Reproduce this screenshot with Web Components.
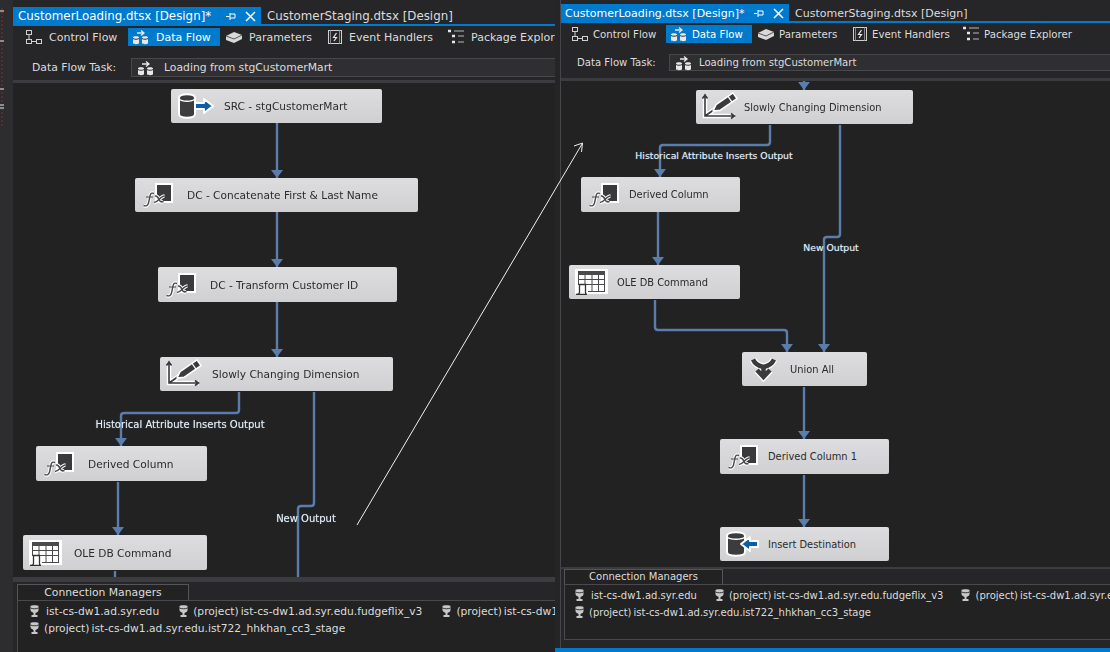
<!DOCTYPE html>
<html>
<head>
<meta charset="utf-8">
<title>CustomerLoading.dtsx</title>
<style>
  html, body { margin: 0; height: 100%; background: #252527; }
  body { font-family: "DejaVu Sans", sans-serif; overflow: hidden; }
  #desktop { display: flex; width: 1110px; height: 652px; position: relative; filter: blur(0.35px); }
  #right { display: flex; flex-direction: column; width: 555px; flex: none; }
  #right ssis-designer { flex: 1; min-height: 0; margin-left: 5px; border-left: 1px solid #45454a; box-sizing: border-box; }
  #left-designer { width: 542px; --top: 7px; --tab-nudge: 1px; --bar-h: 22px; --task-gap: 10px; --task-h: 19px; --task-after: 3px; --canvas-h: 494px; --split: 5px; --conn-gap: 2px;
    --tab-font: 11.85px; --tool-font: 11px; --tool-gap: 6px; --task-font: 10.8px; --label-w: 118px; --label-pad: 19px; --combo-pad: 5px; --combo-gap: 9px;
    --node-font: 10.6px; --label-font: 10px; --conn-font: 10.7px; --conn-pad: 12px; --conn-after: 20px; --head-w: 172px; --head-h: 16px; --head-font: 10.8px; --panel-left: 4px; --panel-gap: -2px; }
  #right-designer { --top: 4px; --tab-nudge: 1px; --bar-h: 22px; --task-gap: 9px; --task-h: 17px; --task-after: 7px; --canvas-h: 486px; --split: 2px; --conn-gap: 0px;
    --tab-font: 11px; --tool-font: 10.2px; --tool-gap: 4px; --task-font: 10.1px; --label-w: 108px; --label-pad: 16px; --combo-pad: 5px; --combo-gap: 6px;
    --node-font: 9.9px; --label-font: 9.3px; --conn-font: 10px; --conn-pad: 10px; --conn-after: 18px; --head-w: 159px; --head-h: 15px; --head-font: 10px; --panel-left: 3px; --panel-gap: 8px; }
</style>
</head>
<body>
<div id="desktop">
  <side-strip></side-strip>

  <ssis-designer id="left-designer">
    <doc-tab slot="tabs" active label="CustomerLoading.dtsx [Design]*" width="248" pad="5"></doc-tab>
    <doc-tab slot="tabs" label="CustomerStaging.dtsx [Design]"></doc-tab>

    <tool-tab slot="tools" icon="control" left="8" width="107">Control Flow</tool-tab>
    <tool-tab slot="tools" icon="data" active width="92">Data Flow</tool-tab>
    <tool-tab slot="tools" icon="param" left="1" width="101">Parameters</tool-tab>
    <tool-tab slot="tools" icon="event" left="1" width="120">Event Handlers</tool-tab>
    <tool-tab slot="tools" icon="tree" width="130">Package Explorer</tool-tab>

    <flow-canvas slot="canvas" origin-y="83" origin-x="13" lines='[
      [[277,123],[277,178]],[[277,212],[277,267]],[[277,302],[277,357]],
      [[239,392],[239,413],[121,413],[121,446]],
      [[314,392],[314,506],[298,506],[298,577,0]],
      [[118,482],[118,535]],[[115,571],[115,577,0]]]'>
      <flow-node x="171" y="89" w="211" h="34" text-x="53" icon="source">SRC - stgCustomerMart</flow-node>
      <flow-node x="135" y="178" w="283" h="34" text-x="52" icon="fx">DC - Concatenate First &amp; Last Name</flow-node>
      <flow-node x="158" y="267" w="239" h="35" text-x="52" icon="fx">DC - Transform Customer ID</flow-node>
      <flow-node x="160" y="357" w="233" h="34" text-x="52" icon="scd">Slowly Changing Dimension</flow-node>
      <flow-node x="36" y="446" w="171" h="35" text-x="52" icon="fx">Derived Column</flow-node>
      <flow-node x="23" y="535" w="184" h="35" text-x="51" icon="grid">OLE DB Command</flow-node>
      <flow-label x="180" y="424">Historical Attribute Inserts Output</flow-label>
      <flow-label x="306" y="518">New Output</flow-label>
    </flow-canvas>

    <conn-item slot="conns" gap="7">ist-cs-dw1.ad.syr.edu</conn-item>
    <conn-item slot="conns" project>ist-cs-dw1.ad.syr.edu.fudgeflix_v3</conn-item>
    <conn-item slot="conns" project>ist-cs-dw1.ad.syr.edu</conn-item>
    <conn-item slot="conns" project>ist-cs-dw1.ad.syr.edu.ist722_hhkhan_cc3_stage</conn-item>
  </ssis-designer>

  <div id="right">
    <ssis-designer id="right-designer">
      <doc-tab slot="tabs" active label="CustomerLoading.dtsx [Design]*" width="228" pad="4"></doc-tab>
      <doc-tab slot="tabs" label="CustomerStaging.dtsx [Design]"></doc-tab>

      <tool-tab slot="tools" icon="control" left="6" width="99">Control Flow</tool-tab>
      <tool-tab slot="tools" icon="data" active width="86">Data Flow</tool-tab>
      <tool-tab slot="tools" icon="param" left="1" width="95">Parameters</tool-tab>
      <tool-tab slot="tools" icon="event" width="110">Event Handlers</tool-tab>
      <tool-tab slot="tools" icon="tree" width="130">Package Explorer</tool-tab>

      <flow-canvas slot="canvas" origin-y="81" origin-x="561" lines='[
        [[804,81],[804,90]],
        [[770,125],[770,145],[660,145],[660,177]],
        [[840,125],[840,237],[824,237],[824,352]],
        [[658,212],[658,265]],
        [[655,300],[655,330],[787,330],[787,352]],
        [[804,387],[804,439]],[[804,475],[804,527]]]'>
        <flow-node x="696" y="90" w="217" h="34" text-x="48" icon="scd">Slowly Changing Dimension</flow-node>
        <flow-node x="581" y="177" w="159" h="35" text-x="48" icon="fx">Derived Column</flow-node>
        <flow-node x="569" y="265" w="171" h="34" text-x="48" icon="grid">OLE DB Command</flow-node>
        <flow-node x="742" y="352" w="125" h="34" text-x="48" icon="union">Union All</flow-node>
        <flow-node x="720" y="439" w="169" h="35" text-x="48" icon="fx">Derived Column 1</flow-node>
        <flow-node x="720" y="527" w="169" h="34" text-x="48" icon="dest">Insert Destination</flow-node>
        <flow-label x="714" y="155">Historical Attribute Inserts Output</flow-label>
        <flow-label x="831" y="247">New Output</flow-label>
      </flow-canvas>

      <conn-item slot="conns" gap="7">ist-cs-dw1.ad.syr.edu</conn-item>
      <conn-item slot="conns" project>ist-cs-dw1.ad.syr.edu.fudgeflix_v3</conn-item>
      <conn-item slot="conns" project>ist-cs-dw1.ad.syr.edu</conn-item>
      <conn-item slot="conns" project>ist-cs-dw1.ad.syr.edu.ist722_hhkhan_cc3_stage</conn-item>
    </ssis-designer>
    <status-bar></status-bar>
  </div>

  <move-arrow></move-arrow>
</div>

<script>
const ICONS = {
  control: `<svg width="18" height="16" viewBox="0 0 18 16" fill="none" stroke="#d0d0d0"><rect x="1.5" y="1.500" width="5" height="4"/><rect x="1.5" y="10.500" width="5" height="4"/><rect x="11.5" y="10.500" width="5" height="4"/><path d="M4 6v4M7 12.500h4"/></svg>`,
  data: `<svg width="18" height="16" viewBox="0 0 18 16"><path d="M5 4h6M9 1.500l3 2.500-3 2.500" fill="none" stroke="#e8e8e8" stroke-width="1.300"/><path d="M1 8.500c0-1.600 6-1.600 6 0v5.500c0 1.600-6 1.600-6 0zM10 8.500c0-1.600 6-1.600 6 0v5.500c0 1.600-6 1.600-6 0z" fill="#e8e8e8"/><path d="M1 9.500c1 1 5 1 6 0M10 9.500c1 1 5 1 6 0" stroke="#333" fill="none"/></svg>`,
  param: `<svg width="18" height="14" viewBox="0 0 18 14"><path d="M1 6l8-4 8 3v4l-8 4-8-3z" fill="#d8d8d8"/><path d="M1 6l8 3 8-4" stroke="#555" fill="none"/></svg>`,
  event: `<svg width="16" height="16" viewBox="0 0 16 16" fill="none"><rect x="1.500" y="1.500" width="13" height="13" stroke="#d0d0d0"/><path d="M3.500 1.500v13M12.500 1.500v13" stroke="#888"/><path d="M9.500 4L6.500 8.500h3L7 12" stroke="#e8e8e8" stroke-width="1.200"/></svg>`,
  tree: `<svg width="18" height="16" viewBox="0 0 18 16" fill="none"><path d="M1 2h3M5 7h3M5 13h3" stroke="#e8e8e8" stroke-width="2.400"/><path d="M7 2h10M11 7h6M11 13h6" stroke="#b8b8b8"/></svg>`,
  source: `<svg width="40" height="28" viewBox="0 0 40 28"><path d="M2 6c0-5 16-5 16 0v16c0 5-16 5-16 0z" fill="#3c3c3e" stroke="#fff" stroke-width="2"/><path d="M2 7c3 3 13 3 16 0" stroke="#fff" stroke-width="1.600" fill="none"/><path d="M18 11h9V7l9 7-9 7v-4h-9z" fill="#0b5fa8" stroke="#fff" stroke-width="2" stroke-linejoin="round"/></svg>`,
  dest: `<svg width="40" height="28" viewBox="0 0 40 28"><path d="M1 6c0-5 18-5 18 0v16c0 5-18 5-18 0z" fill="#3c3c3e" stroke="#fff" stroke-width="2"/><path d="M1 7c3 3 15 3 18 0" stroke="#fff" stroke-width="1.600" fill="none"/><path d="M32 11h-8V7l-9 7 9 7v-4h8z" fill="#0b5fa8" stroke="#fff" stroke-width="2" stroke-linejoin="round"/></svg>`,
  fx: `<svg width="32" height="28" viewBox="0 0 32 28"><rect x="15" y="3" width="16" height="18" fill="#3a3a3c" stroke="#fff" stroke-width="2"/><g fill="none" stroke="#fff" stroke-width="3.500"><path d="M13 12.500c-2.500-1-3.500 0-4 2.500L7.500 22c-.5 2.500-2.500 3.500-5 2.500"/><path d="M14 15c2.500-.5 3 1 4 3.500s2 3 4.500 2M23.500 15c-2 0-4 2-5.500 3.500s-3 3-5 3"/></g><g fill="none" stroke="#4a4a4c"><path d="M13 12.500c-2.500-1-3.500 0-4 2.500L7.500 22c-.5 2.500-2.500 3.500-5 2.500" stroke-width="1.400"/><path d="M5 16h7"/><path d="M14 15c2.500-.5 3 1 4 3.500s2 3 4.500 2M23.500 15c-2 0-4 2-5.500 3.500s-3 3-5 3" stroke-width="1.500"/></g></svg>`,
  scd: `<svg width="36" height="30" viewBox="0 0 36 30"><g fill="none" stroke="#fff"><path d="M3 3v21h30M3 24l10-7" stroke-width="4.500"/></g><path d="M3 4v20h29M3 24l10-7M.5 6.500L3 3l2.500 3.500M29 21.500l3.500 2.500-3.500 2.500" fill="none" stroke="#3a3a3c" stroke-width="1.600"/><path d="M11 19l3-6.400L31 .8l4 5.800L18 18.400z" fill="#3a3a3c" stroke="#fff" stroke-width="1.600" stroke-linejoin="round"/><path d="M26 4.300l4 5.800" stroke="#fff" stroke-width="1.200"/></svg>`,
  grid: `<svg width="33" height="26" viewBox="0 0 33 26"><rect width="33" height="25" fill="#fff"/><rect x="3" y="2" width="27" height="4" fill="#4a4a4c"/><path d="M3.500 6v10M10 6v17M17 6v17M23.500 6v17M29.500 6v17M3 10.500h27M3 15.500h27M13 22.500h17" stroke="#4a4a4c" fill="none"/><path d="M1 25.500h11c-1 0-1.500-1-1.500-2V15.500H4.500v8c0 1-1 2-3.500 2z" fill="#fff" stroke="#333" stroke-width="1.300"/></svg>`,
  union: `<svg width="32" height="27" viewBox="0 0 32 27" fill="none"><g stroke="#fff" stroke-width="7"><path d="M5 3.500C7 8 11 10 15.500 11 20 10 24 8 26 3.500M15.500 9v10M9 14l6.500 7 6.500-7"/></g><g stroke="#3a3a3c" stroke-width="4.500"><path d="M5 3.500C7 8 11 10 15.500 11 20 10 24 8 26 3.500M15.500 9v10M9 14l6.500 7 6.500-7"/></g></svg>`,
  db: `<svg width="9" height="13" viewBox="0 0 9 13"><path d="M.5 1c0-1 8-1 8 0v4c0 1.800-1.700 2.700-3 2.900v2.100h2v2h-6v-2h2V7.900C3.200 7.700.5 6.800.5 5z" fill="#c8c8c8"/><path d="M.5 3c2 1 6 1 8 0" stroke="#333" fill="none"/></svg>`
};

// plain helper, all the small classes below only differ by template
function shadow(el, html) {
  const root = el.attachShadow({mode: "open"});
  root.innerHTML = html;
  return root;
}

class SideStrip extends HTMLElement {
  constructor() {
    super();
    shadow(this, `<style>
      :host { display: block; width: 13px; flex: none; background: #2d2d30; position: relative; box-sizing: border-box; }
      .dots { width: 2px; height: 118px; margin: 8px 0 0 1px; background: repeating-linear-gradient(#5a2c2e 0 2px, #2d2d30 2px 4px); }
      i { position: absolute; left: 0; width: 4px; height: 2px; background: #8c8c8c; }
    </style>
    <div class="dots"></div>
    <i style="top:10px"></i><i style="top:40px"></i><i style="top:88px"></i><i style="top:104px"></i><i style="top:107px"></i>`);
  }
}

class SsisDesigner extends HTMLElement {
  constructor() {
    super();
    shadow(this, `<style>
      :host { display: flex; flex-direction: column; flex: none; overflow: hidden; padding-top: var(--top); box-sizing: border-box; background: #262628; color: #dcdcdc; font-family: "DejaVu Sans", sans-serif; }
      .tabs { display: flex; height: 19px; box-sizing: border-box; align-items: stretch; flex: none; padding-bottom: 2px; background: linear-gradient(#262628 calc(100% - 2px), #007acc 0); }
      .tools { display: flex; height: var(--bar-h); align-items: center; flex: none; }
      .task { display: flex; align-items: center; height: var(--task-h); margin-top: var(--task-gap); flex: none; white-space: nowrap; font-size: var(--task-font); }
      .task b { font-weight: 400; width: var(--label-w); padding-left: var(--label-pad); box-sizing: border-box; flex: none; }
      .combo { flex: 1; height: 100%; display: flex; align-items: center; gap: var(--combo-gap); padding-left: var(--combo-pad); border: 1px solid #48484c; border-right: 0; box-sizing: border-box; background: #2f2f32; }
      .canvas { height: var(--canvas-h); margin-top: var(--task-after); flex: none; background: #222222; border-top: 3px solid #3c3c40; position: relative; overflow: hidden; }
      .split { height: var(--split); background: #3c3c40; flex: none; }
      .conn-head { margin: var(--conn-gap) 0 0 var(--panel-left); height: var(--head-h); width: var(--head-w); box-sizing: border-box; border: 1px solid #555559; border-bottom: 0; text-align: center; font-size: var(--head-font); line-height: calc(var(--head-h) - 1px); flex: none; background: #222; }
      .conns { flex: 1; min-height: 0; margin: 0 0 var(--panel-gap) var(--panel-left); padding: 2px 0 0 var(--conn-pad); border: 1px solid #4a4a4e; background: #222222; display: flex; flex-wrap: wrap; align-content: flex-start; overflow: hidden; width: 640px; box-sizing: border-box; }
    </style>
    <div class="tabs"><slot name="tabs"></slot></div>
    <div class="tools"><slot name="tools"></slot></div>
    <div class="task"><b>Data Flow Task:</b>
      <div class="combo">${ICONS.data}<span>Loading from stgCustomerMart</span></div>
    </div>
    <div class="canvas"><slot name="canvas"></slot></div>
    <div class="split"></div>
    <div class="conn-head">Connection Managers</div>
    <div class="conns"><slot name="conns"></slot></div>`);
  }
}

class DocTab extends HTMLElement {
  constructor() {
    super();
    const active = this.hasAttribute("active");
    const w = this.getAttribute("width");
    shadow(this, `<style>
      :host { display: flex; align-items: center; flex: none; box-sizing: border-box; padding: var(--tab-nudge) 5px 0 ${this.getAttribute("pad") || 6}px; white-space: nowrap; font-size: var(--tab-font); color: #dcdcdc; ${active ? "background:#007acc;color:#fff;" : ""} ${w ? "width:" + w + "px;" : ""} }
      span { flex: 1; }
      svg { flex: none; margin-left: 9px; }
    </style>
    <span>${this.getAttribute("label")}</span>
    ${active ? `<svg width="10" height="9" viewBox="0 0 10 9" fill="none" stroke="#fff"><path d="M0 4.500h3.500M4 1v7M4 2h5v4H4"/></svg>
    <svg width="11" height="11" viewBox="0 0 11 11" fill="none" stroke="#fff" stroke-width="1.500"><path d="M1 1l9 9M10 1l-9 9"/></svg>` : ""}`);
  }
}

class ToolTab extends HTMLElement {
  constructor() {
    super();
    const active = this.hasAttribute("active");
    shadow(this, `<style>
      :host { display: flex; align-items: center; gap: var(--tool-gap); flex: none; height: 18px; box-sizing: border-box; padding: 0 4px; white-space: nowrap; font-size: var(--tool-font); width: ${this.getAttribute("width")}px; margin-left: ${this.getAttribute("left") || 0}px; ${active ? "background:#007acc;color:#fff;" : ""} }
    </style>
    ${ICONS[this.getAttribute("icon")]}<slot></slot>`);
  }
}

class FlowCanvas extends HTMLElement {
  constructor() {
    super();
    const ox = +this.getAttribute("origin-x"), oy = +this.getAttribute("origin-y");
    const lines = JSON.parse(this.getAttribute("lines"));
    let paths = "";
    for (const pts of lines) {
      const last = pts[pts.length - 1];
      let d = "";
      pts.forEach((p, i) => {
        const x = p[0] - ox, y = p[1] - oy;
        if (i == 0) { d += `M${x} ${y}`; return; }
        // small rounded corner at each bend
        if (i < pts.length - 1) {
          const next = pts[i + 1], prev = pts[i - 1];
          const dx1 = Math.sign(p[0] - prev[0]), dy1 = Math.sign(p[1] - prev[1]);
          const dx2 = Math.sign(next[0] - p[0]), dy2 = Math.sign(next[1] - p[1]);
          d += `L${x - dx1 * 3} ${y - dy1 * 3}Q${x} ${y} ${x + dx2 * 3} ${y + dy2 * 3}`;
        } else {
          d += `L${x} ${y}`;
        }
      });
      paths += `<path d="${d}" fill="none" stroke="#5a7dac" stroke-width="2.400"/>`;
      if (last[2] !== 0) {
        const x = last[0] - ox, y = last[1] - oy;
        paths += `<path d="M${x - 6} ${y - 8}h12l-6 8z" fill="#5a7dac"/>`;
      }
    }
    shadow(this, `<style>
      :host { display: block; position: absolute; inset: 0; --ox: ${ox}px; --oy: ${oy}px; }
      svg { position: absolute; left: 0; top: 0; }
    </style>
    <svg width="560" height="520">${paths}</svg><slot></slot>`);
  }
}

class FlowNode extends HTMLElement {
  constructor() {
    super();
    const a = k => this.getAttribute(k);
    shadow(this, `<style>
      :host { position: absolute; left: calc(${a("x")}px - var(--ox)); top: calc(${a("y")}px - var(--oy)); width: ${a("w")}px; height: ${a("h")}px; box-sizing: border-box; display: flex; align-items: center; border-radius: 2px; background: linear-gradient(#dddde0, #d0d0d3); color: #2b2b2b; white-space: nowrap; font-size: var(--node-font); }
      .ic { width: ${a("text-x")}px; flex: none; padding-left: 6px; box-sizing: border-box; display: flex; }
    </style>
    <div class="ic">${ICONS[a("icon")]}</div><slot></slot>`);
  }
}

class FlowLabel extends HTMLElement {
  constructor() {
    super();
    shadow(this, `<style>
      :host { position: absolute; left: calc(${this.getAttribute("x")}px - var(--ox)); top: calc(${this.getAttribute("y")}px - var(--oy)); transform: translate(-50%, -50%); white-space: nowrap; font-size: var(--label-font); color: #e4eef8; text-shadow: 0 0 1px rgba(190, 220, 255, .6); }
    </style><slot></slot>`);
  }
}

class ConnItem extends HTMLElement {
  constructor() {
    super();
    const project = this.hasAttribute("project");
    shadow(this, `<style>
      :host { display: inline-flex; align-items: center; height: 17px; margin-right: var(--conn-after); white-space: nowrap; font-size: var(--conn-font); color: #dcdcdc; }
      svg { margin-right: ${this.getAttribute("gap") || 5}px; }
      span { margin-right: 2px; }
    </style>${ICONS.db}${project ? "<span>(project)</span>" : ""}<slot></slot>`);
  }
}

class StatusBar extends HTMLElement {
  constructor() {
    super();
    shadow(this, `<style>:host { display: block; height: 4px; flex: none; background: #007acc; }</style>`);
  }
}

class MoveArrow extends HTMLElement {
  constructor() {
    super();
    shadow(this, `<style>
      :host { position: absolute; left: 350px; top: 135px; pointer-events: none; }
      svg { display: block; }
    </style>
    <svg width="240" height="395" fill="none" stroke="#f0f0f0"><path d="M7 390L232 9M224 11l8.500-3-1 9"/></svg>`);
  }
}

customElements.define("side-strip", SideStrip);
customElements.define("ssis-designer", SsisDesigner);
customElements.define("doc-tab", DocTab);
customElements.define("tool-tab", ToolTab);
customElements.define("flow-canvas", FlowCanvas);
customElements.define("flow-node", FlowNode);
customElements.define("flow-label", FlowLabel);
customElements.define("conn-item", ConnItem);
customElements.define("status-bar", StatusBar);
customElements.define("move-arrow", MoveArrow);
</script>
</body>
</html>
